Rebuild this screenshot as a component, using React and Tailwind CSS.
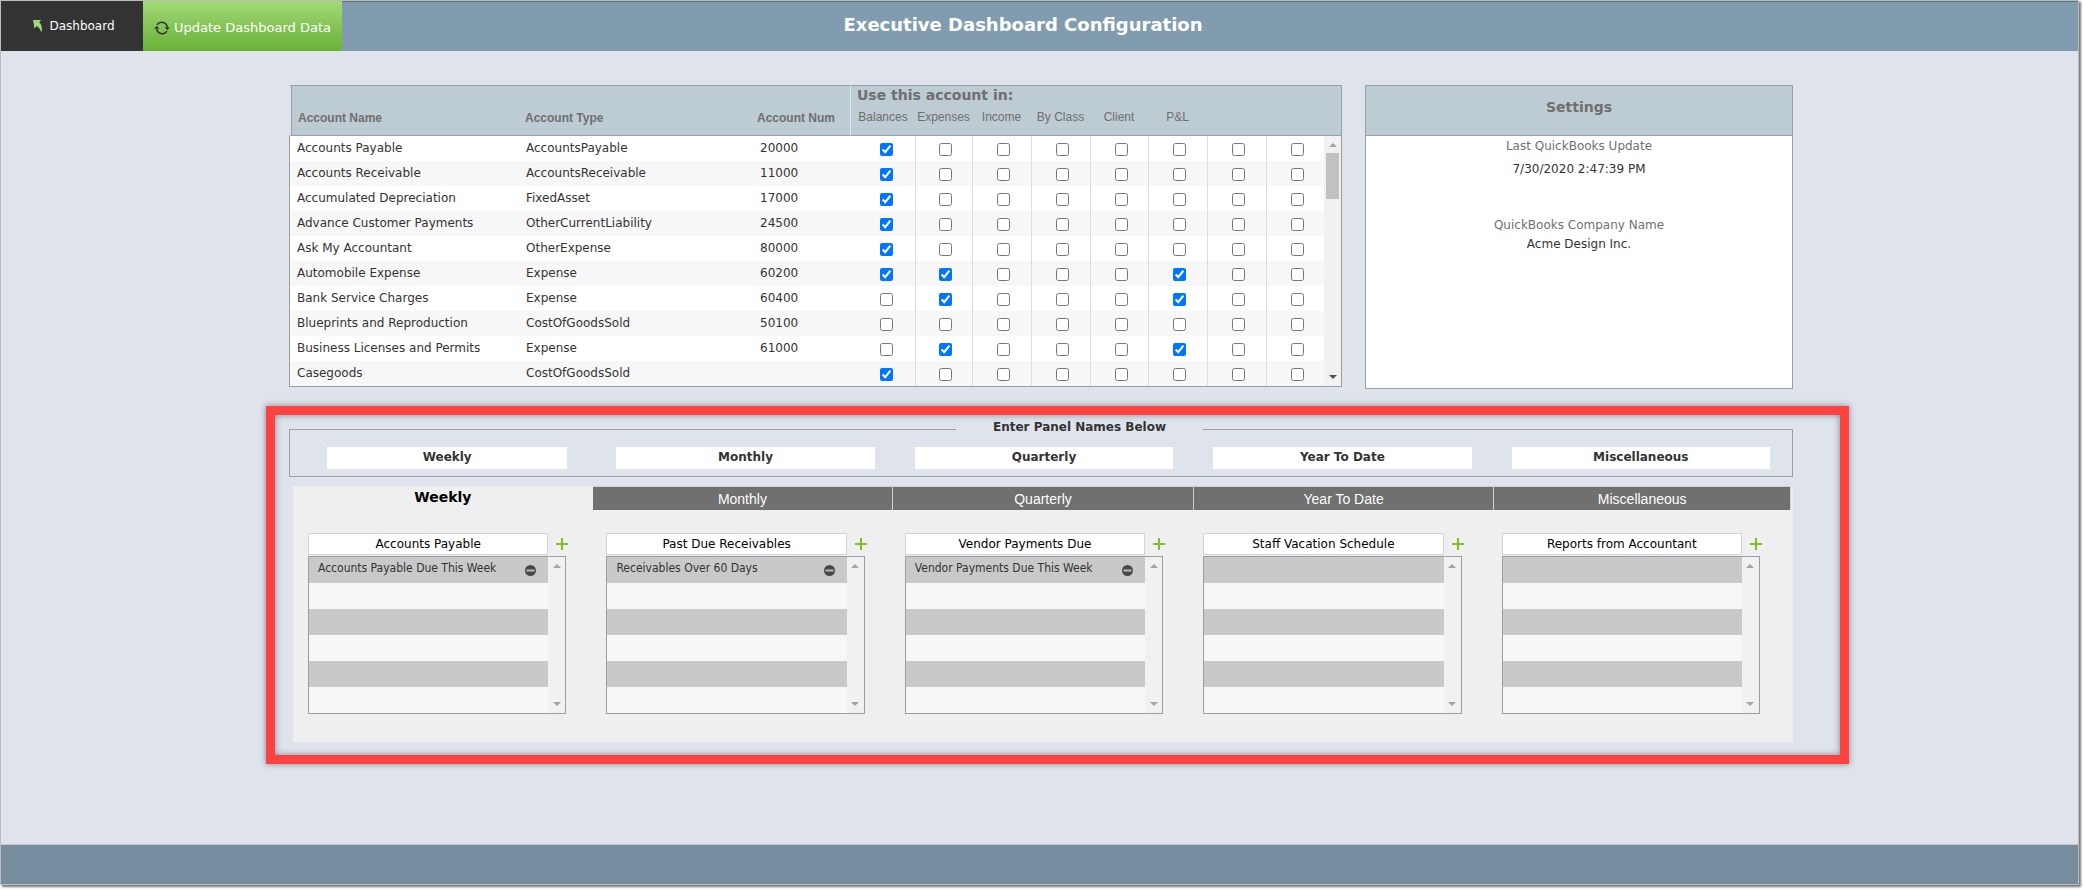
import React, { useState } from 'react';

const USES = ['Balances', 'Expenses', 'Income', 'By Class', 'Client', 'P&L', '', ''];

const ACCOUNTS = [
  { name: 'Accounts Payable', type: 'AccountsPayable', num: '20000', uses: [0] },
  { name: 'Accounts Receivable', type: 'AccountsReceivable', num: '11000', uses: [0] },
  { name: 'Accumulated Depreciation', type: 'FixedAsset', num: '17000', uses: [0] },
  { name: 'Advance Customer Payments', type: 'OtherCurrentLiability', num: '24500', uses: [0] },
  { name: 'Ask My Accountant', type: 'OtherExpense', num: '80000', uses: [0] },
  { name: 'Automobile Expense', type: 'Expense', num: '60200', uses: [0, 1, 5] },
  { name: 'Bank Service Charges', type: 'Expense', num: '60400', uses: [1, 5] },
  { name: 'Blueprints and Reproduction', type: 'CostOfGoodsSold', num: '50100', uses: [] },
  { name: 'Business Licenses and Permits', type: 'Expense', num: '61000', uses: [1, 5] },
  { name: 'Casegoods', type: 'CostOfGoodsSold', num: '', uses: [0] },
];

const PERIODS = ['Weekly', 'Monthly', 'Quarterly', 'Year To Date', 'Miscellaneous'];

const PANELS = [
  { title: 'Accounts Payable', items: ['Accounts Payable Due This Week'] },
  { title: 'Past Due Receivables', items: ['Receivables Over 60 Days'] },
  { title: 'Vendor Payments Due', items: ['Vendor Payments Due This Week'] },
  { title: 'Staff Vacation Schedule', items: [] },
  { title: 'Reports from Accountant', items: [] },
];

const PANEL_ROWS = [0, 1, 2, 3, 4, 5];

function BackIcon() {
  return (
    <svg width="10" height="13" viewBox="0 0 10 13" aria-hidden="true">
      <path d="M0 0h8L6.200 2.200C8.800 4.600 9.600 8.200 8.300 12.800 7.600 9.600 6 7.600 3.800 6L1.500 8.500z" fill="#a1da76" />
    </svg>
  );
}

function RefreshIcon() {
  return (
    <svg width="16" height="14" viewBox="0 0 16 14" fill="none" stroke="#333" strokeWidth="1.5" aria-hidden="true">
      <path d="M3 3.800A5.600 5.600 0 0 1 13.300 6.500" />
      <path d="M13 10.200A5.600 5.600 0 0 1 2.700 7.500" />
      <path d="M10.600 6.200h5.200l-2.400 3z" fill="#333" stroke="none" />
      <path d="M5.400 7.800H.2l2.400-3z" fill="#333" stroke="none" />
    </svg>
  );
}

function Arrow({ down, color = '#a3a3a3' }) {
  return (
    <svg width="8" height="4" viewBox="0 0 8 4" aria-hidden="true">
      <path d={down ? 'M0 0h8L4 4z' : 'M0 4h8L4 0z'} fill={color} />
    </svg>
  );
}

function AccountsTable() {
  return (
    <table className="w-full table-fixed border-separate border-spacing-0 border-r border-b border-[#989fa6] text-xs text-[#333]">
      <colgroup>
        <col />
        <col className="w-[233px]" />
        <col className="w-[99px]" />
        <col className="w-[65px]" />
        <col className="w-[57px]" />
        <col className="w-[59px]" />
        <col className="w-[59px]" />
        <col className="w-[58px]" />
        <col className="w-[59px]" />
        <col className="w-[59px]" />
        <col className="w-[58px]" />
        <col className="w-[17px]" />
      </colgroup>
      <thead className="text-left font-['Liberation_Sans',Arial,sans-serif] text-[#6f6f6f]">
        <tr className="h-[19px]">
          <th
            rowSpan={2}
            className="border-t border-b border-l-2 border-y-[#989fa6] border-l-[#dfe3eb] bg-[#bdccd2] pb-[9px] pl-[7px] align-bottom shadow-[inset_1px_0_0_#989fa6]"
          >
            Account Name
          </th>
          <th rowSpan={2} className="border-y border-[#989fa6] bg-[#bdccd2] pb-[9px] pl-[7px] align-bottom">
            Account Type
          </th>
          <th rowSpan={2} className="border-y border-[#989fa6] bg-[#bdccd2] pb-[9px] pl-1.5 align-bottom">
            Account Num
          </th>
          <th
            colSpan={9}
            className="border-t border-l border-t-[#989fa6] border-l-[#dfe6ea] bg-[#bdccd2] p-0 pl-1.5 font-['DejaVu_Sans',Verdana,sans-serif] text-sm leading-4"
          >
            Use this account in:
          </th>
        </tr>
        <tr className="h-8">
          {USES.map((use, i) => (
            <th
              key={i}
              className={`border-b border-b-[#989fa6] bg-[#bdccd2] p-0 pt-[5px] text-center align-top font-normal leading-4 whitespace-nowrap ${
                i === 0 ? 'border-l border-l-[#dfe6ea]' : ''
              }`}
            >
              {use}
            </th>
          ))}
          <th className="border-b border-[#989fa6] bg-[#bdccd2] p-0" />
        </tr>
      </thead>
      <tbody>
        {ACCOUNTS.map((account, row) => (
          <tr key={account.name} className={`h-[25px] leading-4 ${row % 2 ? 'bg-[#f7f7f7]' : 'bg-white'}`}>
            <td className="border-l border-[#989fa6] p-0 pb-0.5 pl-[7px]">{account.name}</td>
            <td className="p-0 pb-0.5 pl-2">{account.type}</td>
            <td className="p-0 pb-0.5 pl-[9px]">{account.num}</td>
            {USES.map((use, i) => (
              <td key={i} className={`p-0 pt-0.5 ${i === 0 ? 'pl-2' : 'border-l border-[#ddd] pl-[3px]'}`}>
                <input
                  type="checkbox"
                  defaultChecked={account.uses.includes(i)}
                  aria-label={`${account.name} ${use}`}
                  className="mx-auto block size-[13px]"
                />
              </td>
            ))}
            {row === 0 && (
              <td rowSpan={ACCOUNTS.length} className="bg-[#f1f1f1] p-0 align-top">
                <div className="flex h-[250px] flex-col items-center pt-[7px] pb-[7px]">
                  <Arrow />
                  <div className="mt-1.5 h-[46px] w-[13px] bg-[#c1c1c1]" />
                  <div className="flex-1" />
                  <Arrow down color="#505050" />
                </div>
              </td>
            )}
          </tr>
        ))}
      </tbody>
    </table>
  );
}

function Settings() {
  return (
    <section className="w-[428px] shrink-0 border border-[#989fa6] bg-white text-center text-xs leading-4 text-[#333]">
      <h2 className="h-[50px] border-b border-[#989fa6] bg-[#bdccd2] pt-[11px] text-sm leading-5 font-bold text-[#6f6f6f]">
        Settings
      </h2>
      <p className="mt-0.5 text-[#707070]">Last QuickBooks Update</p>
      <p className="mt-[7px]">7/30/2020 2:47:39 PM</p>
      <p className="mt-10 text-[#707070]">QuickBooks Company Name</p>
      <p className="mt-[3px]">Acme Design Inc.</p>
    </section>
  );
}

function Panel({ title, items }) {
  return (
    <div>
      <div className="flex items-center">
        <input
          defaultValue={title}
          aria-label="Panel title"
          className="h-[22px] min-w-0 flex-1 border border-[#d3d3d3] bg-white text-center text-xs text-black"
        />
        <button aria-label={`Add to ${title}`} className="flex w-[18px] justify-end">
          <svg width="12" height="12" viewBox="0 0 12 12" className="-mr-0.5 shrink-0" aria-hidden="true">
            <path d="M5 0h2v5h5v2H7v5H5V7H0V5h5z" fill="#7fbf2f" />
          </svg>
        </button>
      </div>
      <div className="mt-px flex border border-[#989fa6]">
        <ul className="min-w-0 flex-1">
          {PANEL_ROWS.map((row) => (
            <li
              key={row}
              className={`flex h-[26px] justify-between pr-3 pl-[9px] font-['DejaVu_Sans_Condensed','DejaVu_Sans',Tahoma,sans-serif] text-xs leading-[22px] text-[#333] ${
                row % 2 ? 'bg-[#f7f7f7]' : 'bg-[#c9c9c9]'
              }`}
            >
              {items[row] && (
                <>
                  <span className="whitespace-nowrap">{items[row]}</span>
                  <button aria-label={`Remove ${items[row]}`}>
                    <svg width="11" height="11" viewBox="0 0 11 11" aria-hidden="true">
                      <circle cx="5.500" cy="5.500" r="5.500" fill="#484848" />
                      <path d="M1.500 4.500h8v2h-8z" fill="#bbb" />
                    </svg>
                  </button>
                </>
              )}
            </li>
          ))}
        </ul>
        <div className="flex w-[17px] flex-col items-center justify-between bg-[#f1f1f1] py-[7px]">
          <Arrow />
          <Arrow down />
        </div>
      </div>
    </div>
  );
}

export default function App() {
  const [tab, setTab] = useState('Weekly');

  return (
    <div className="flex min-h-screen flex-col bg-white pr-[5px] pb-1.5 font-['DejaVu_Sans',Verdana,sans-serif]">
      <div className="flex flex-1 flex-col border border-[#bdbdbd] bg-[#dfe3eb] shadow-[2px_2px_2px_#777]">
        <header className="flex h-[50px] bg-[#819cae]">
          <button className="flex w-[142px] items-center justify-center gap-1.5 bg-[#333] pl-1 text-xs text-white">
            <BackIcon />
            Dashboard
          </button>
          <button className="flex w-[199px] items-center justify-center gap-1 bg-linear-to-b from-[#a1da76] to-[#69b135] pt-1 text-[13px] whitespace-nowrap text-white">
            <RefreshIcon />
            Update Dashboard Data
          </button>
          <h1 className="flex-1 border-t border-[#5d707e] pt-[11px] pr-[374px] text-center text-lg leading-6 font-bold text-white">
            Executive Dashboard Configuration
          </h1>
        </header>

        <main className="flex-1 pt-[34px] pr-[229px] pl-[265px]">
          <div className="flex items-start gap-[23px] pr-14 pl-[23px]">
            <div className="min-w-0 flex-1">
              <AccountsTable />
            </div>
            <div className="flex h-[304px]">
              <Settings />
            </div>
          </div>

          <section className="mt-[17px] border-9 border-[#fd4242] pt-1 pr-[47px] pb-[13px] pl-3.5 shadow-[0_0_6px_rgba(60,70,80,0.6),inset_0_0_6px_rgba(60,70,80,0.6)]">
            <fieldset className="border border-[#989fa6] pr-[22px] pb-[7px] pl-7">
              <legend className="ml-[638px] w-[247px] pb-1 text-xs leading-4 font-bold text-[#333]">
                <span className="block text-center">Enter Panel Names Below</span>
              </legend>
              <div className="grid grid-cols-5 gap-10 pt-2">
                {PERIODS.map((period, i) => (
                  <div key={period} className={i === 0 ? 'flex px-[9px]' : 'flex'}>
                    <input
                      defaultValue={period}
                      aria-label={`Panel name ${i + 1}`}
                      className="h-[22px] w-full min-w-0 bg-white pb-0.5 text-center text-xs font-bold text-[#333]"
                    />
                  </div>
                ))}
              </div>
            </fieldset>

            <div className="mt-[9px] ml-1 bg-[#efefef]">
              <div role="tablist" className="mr-0.5 grid grid-cols-[300fr_301fr_301fr_301fr_297fr]">
                {PERIODS.map((period) => (
                  <button
                    key={period}
                    role="tab"
                    aria-selected={tab === period}
                    onClick={() => setTab(period)}
                    className={
                      tab === period
                        ? 'h-6 pb-0.5 text-sm leading-5 font-bold text-black'
                        : "h-6 border-t border-r border-[#cfcfcf] bg-[#707070] font-['Liberation_Sans',Arial,sans-serif] text-sm leading-5 text-white"
                    }
                  >
                    {period}
                  </button>
                ))}
              </div>
              <div role="tabpanel" className="grid grid-cols-5 gap-10 pt-[23px] pr-[33px] pb-7 pl-[15px]">
                {PANELS.map((panel) => (
                  <Panel key={panel.title} title={panel.title} items={panel.items} />
                ))}
              </div>
            </div>
          </section>
        </main>

        <footer className="h-10 border-t border-[#c4c8cc] bg-[#768da0]" />
      </div>
    </div>
  );
}
